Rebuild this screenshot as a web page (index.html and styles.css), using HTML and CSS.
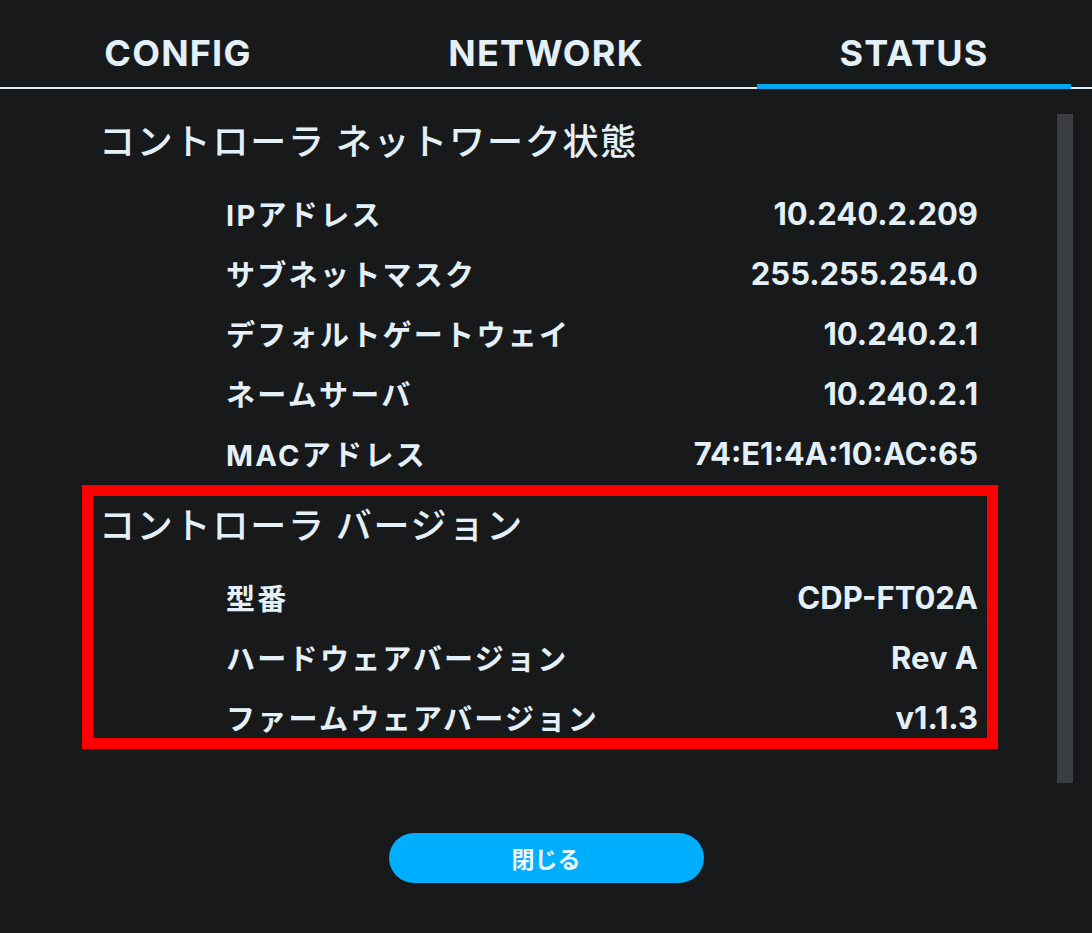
FILE: index.html
```html
<!DOCTYPE html>
<html lang="ja">
<head>
<meta charset="utf-8">
<title>Status</title>
<link rel="stylesheet" href="styles.css">
</head>
<body>
<div class="screen">
  <nav class="tabs">
    <div class="tab">CONFIG</div>
    <div class="tab">NETWORK</div>
    <div class="tab active">STATUS</div>
  </nav>
  <div class="body">
    <div class="content">
      <section class="section">
        <h2 class="heading">コントローラ ネットワーク状態</h2>
        <div class="rows">
          <div class="row"><span class="label">IPアドレス</span><span class="value">10.240.2.209</span></div>
          <div class="row"><span class="label">サブネットマスク</span><span class="value">255.255.254.0</span></div>
          <div class="row"><span class="label">デフォルトゲートウェイ</span><span class="value">10.240.2.1</span></div>
          <div class="row"><span class="label">ネームサーバ</span><span class="value">10.240.2.1</span></div>
          <div class="row"><span class="label">MACアドレス</span><span class="value">74:E1:4A:10:AC:65</span></div>
        </div>
      </section>
      <section class="section highlighted">
        <h2 class="heading">コントローラ バージョン</h2>
        <div class="rows">
          <div class="row"><span class="label">型番</span><span class="value">CDP-FT02A</span></div>
          <div class="row"><span class="label">ハードウェアバージョン</span><span class="value">Rev A</span></div>
          <div class="row"><span class="label">ファームウェアバージョン</span><span class="value">v1.1.3</span></div>
        </div>
      </section>
    </div>
    <div class="scrolltrack"><div class="thumb"></div></div>
  </div>
  <div class="actions">
    <button class="close-btn">閉じる</button>
  </div>
</div>
</body>
</html>
```
FILE: styles.css
```css
html, body {
  margin: 0;
  padding: 0;
  background: #18191b;
}
.screen {
  width: 1092px;
  height: 933px;
  background: #18191b;
  color: #e4f0f8;
  font-family: "Inter", "Noto Sans CJK JP", sans-serif;
  overflow: hidden;
}
.tabs {
  display: flex;
  justify-content: space-between;
  padding: 0 21px;
  border-bottom: 2px solid #e3edf4;
  height: 87px;
  box-sizing: content-box;
}
.tab {
  flex: 0 0 314px;
  text-align: center;
  font-size: 36px;
  font-weight: 700;
  line-height: 44px;
  letter-spacing: 1.2px;
  padding-top: 31px;
  position: relative;
}
.tab.active::after {
  content: "";
  position: absolute;
  left: 0;
  right: 0;
  bottom: -2px;
  height: 5px;
  background: #00a8f0;
}
.body {
  display: flex;
  margin-top: 12px;
  height: 693px;
}
.content {
  margin-left: 82px;
  width: 916px;
}
.section {
  border: 11px solid transparent;
  padding: 5px 9px 1px 6px;
}
.section.highlighted {
  border-color: #ff0000;
}
.heading {
  margin: 0;
  font-family: "Noto Sans CJK JP", sans-serif;
  font-size: 36px;
  font-weight: 500;
  line-height: 44px;
  letter-spacing: 1.8px;
}
.rows {
  display: flex;
  flex-direction: column;
  gap: 20px;
  margin-top: 32px;
  padding-left: 127px;
}
.row {
  display: flex;
  justify-content: space-between;
  align-items: center;
  height: 40px;
}
.label {
  font-size: 29px;
  font-weight: 700;
  letter-spacing: 2.3px;
}
.value {
  font-size: 31px;
  font-weight: 700;
}
.scrolltrack {
  margin-left: 59px;
  width: 16px;
}
.thumb {
  margin-top: 13px;
  height: 669px;
  background: #3b3e41;
}
.actions {
  display: flex;
  justify-content: center;
  margin-top: 39px;
}
.close-btn {
  width: 315px;
  height: 50px;
  border: none;
  border-radius: 25px;
  background: #00aeff;
  color: #eef7fd;
  font-family: "Noto Sans CJK JP", sans-serif;
  font-size: 23px;
  font-weight: 700;
  padding: 0;
}
```
